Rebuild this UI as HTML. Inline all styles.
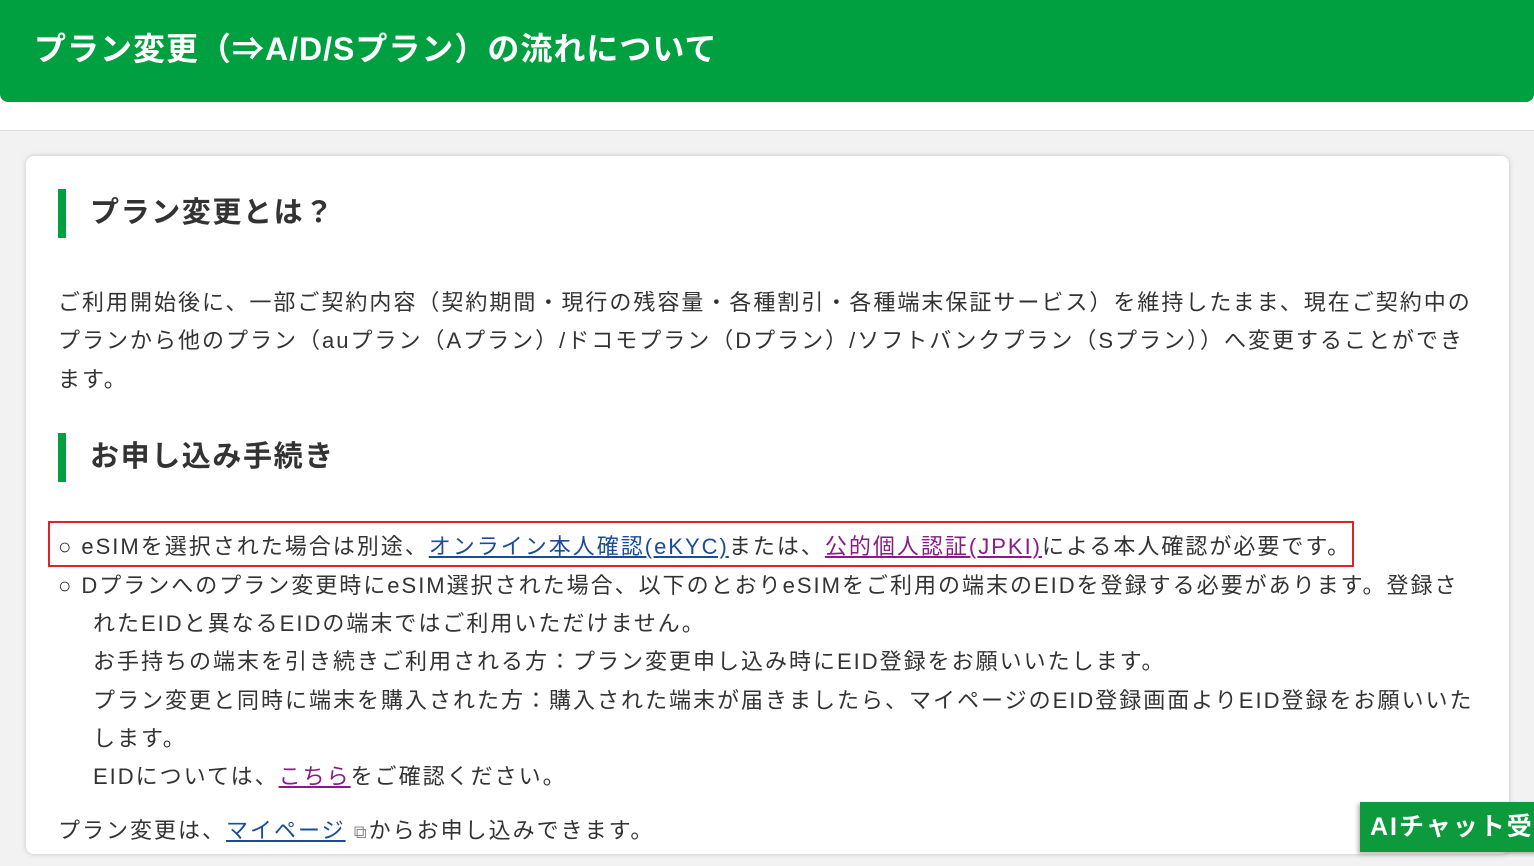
<!DOCTYPE html>
<html><head><meta charset="utf-8"><style>
body{margin:0;width:1534px;height:865px;overflow:hidden;background:#fff;font-family:"Liberation Sans","Noto Sans CJK JP",sans-serif;color:#333;}
.hdr{position:absolute;left:0;top:0;width:1534px;height:102px;background:#00a040;border-radius:0 0 8px 8px;}
.hdr h1{margin:0;position:absolute;left:34px;top:24px;font-size:32px;color:#fff;font-weight:bold;letter-spacing:1px;white-space:nowrap}
.bg{position:absolute;left:0;top:130px;width:1534px;height:735px;background:#f2f2f2;border-top:1px solid #ddd;}
.card{position:absolute;left:26px;top:156px;width:1483px;height:698px;background:#fff;border-radius:8px;box-shadow:0 0 6px rgba(0,0,0,.18);}
.t{position:absolute;white-space:nowrap;font-size:22px;line-height:38.3px;letter-spacing:2px}
h2{position:absolute;margin:0;left:58px;border-left:8px solid #00a040;padding-left:24px;font-size:29px;height:49px;line-height:49px;font-weight:bold;white-space:nowrap;color:#333;letter-spacing:1.6px}
a{text-decoration:underline}
.b{color:#1a4c9a}.p{color:#8a1a8a}
.red{position:absolute;left:48px;top:521px;width:1302px;height:42px;border:2px solid #e0202a}
.ai{position:absolute;left:1360px;top:802px;width:180px;height:50px;background:#0c9a3c;color:#fff;font-weight:bold;font-size:25px;line-height:50px;padding-left:10px;box-shadow:-2px 2px 4px rgba(0,0,0,.3);letter-spacing:2px;white-space:nowrap}
</style></head><body>
<div class="hdr"><h1>プラン変更（⇒A/D/Sプラン）の流れについて</h1></div>
<div class="bg"></div>
<div class="card"></div>
<h2 style="top:189px">プラン変更とは？</h2>
<div class="t" style="left:58px;top:284px">ご利用開始後に、一部ご契約内容（契約期間・現行の残容量・各種割引・各種端末保証サービス）を維持したまま、現在ご契約中の<br>プランから他のプラン（auプラン（Aプラン）/ドコモプラン（Dプラン）/ソフトバンクプラン（Sプラン））へ変更することができ<br>ます。</div>
<h2 style="top:433px">お申し込み手続き</h2>
<div class="red"></div>
<div class="t" style="left:58px;top:528px">○ eSIMを選択された場合は別途、<a class="b">オンライン本人確認(eKYC)</a>または、<a class="p">公的個人認証(JPKI)</a>による本人確認が必要です。</div>
<div class="t" style="left:58px;top:567px">○ Dプランへのプラン変更時にeSIM選択された場合、以下のとおりeSIMをご利用の端末のEIDを登録する必要があります。登録さ</div>
<div class="t" style="left:93px;top:605px">れたEIDと異なるEIDの端末ではご利用いただけません。<br>お手持ちの端末を引き続きご利用される方：プラン変更申し込み時にEID登録をお願いいたします。<br>プラン変更と同時に端末を購入された方：購入された端末が届きましたら、マイページのEID登録画面よりEID登録をお願いいた<br>します。<br>EIDについては、<a class="p">こちら</a>をご確認ください。</div>
<div class="t" style="left:58px;top:812px">プラン変更は、<a class="b">マイページ</a> <span style="font-size:18px;color:#888">⧉</span>からお申し込みできます。</div>
<div class="ai">AIチャット受</div>
</body></html>
